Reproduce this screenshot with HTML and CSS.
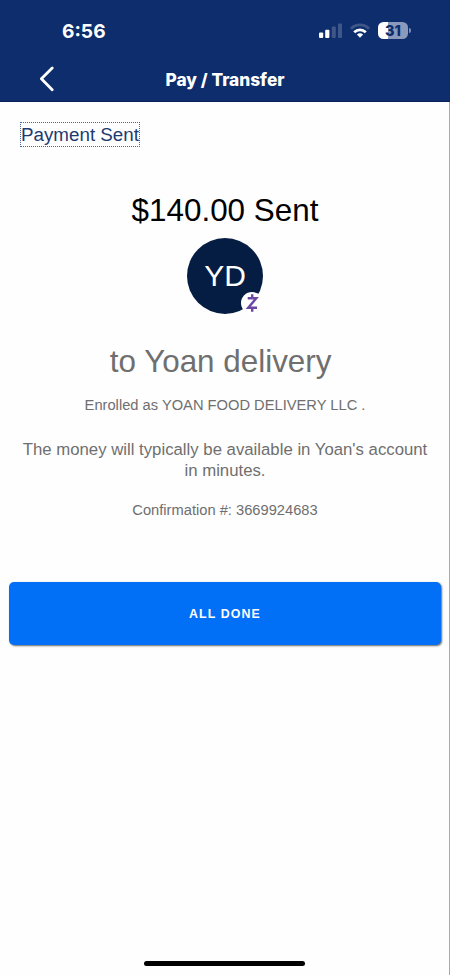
FILE: index.html
```html
<!DOCTYPE html>
<html lang="en">
  <head>
    <title>Pay / Transfer</title>
    <meta charset="utf-8" />
    <meta name="viewport" content="width=device-width, initial-scale=1.0" />
    <link rel="stylesheet" href="styles.css">
  </head>

  <body>
    <header class="header">
      <div class="status-bar">
        <span class="time">6:56</span>
        <div class="status-icons">
          <svg class="signal" width="24" height="16" viewBox="0 0 24 16">
            <rect x="0" y="9.5" width="4.2" height="5.5" rx="1" fill="#fff" />
            <rect x="6.2" y="6.7" width="4.2" height="8.3" rx="1" fill="#fff" />
            <rect x="12.8" y="3.5" width="4" height="11.5" rx="1" fill="#3f5788" />
            <rect x="19" y="0.5" width="4" height="14.5" rx="1" fill="#3f5788" />
          </svg>
          <svg class="wifi" width="20" height="16" viewBox="0 0 20 16" fill="none" stroke-width="2.8">
            <path d="M1 5.7C6 0.7 14 0.7 19 5.7" stroke="#3f5788" />
            <path d="M4.2 9.2C7.5 6.1 12.5 6.1 15.8 9.2" stroke="#fff" />
            <path d="M6.9 11.5C8.7 9.9 11.3 9.9 13.1 11.5L10 14.7Z" fill="#fff" />
          </svg>
          <div class="battery"><span class="battery-level">31</span></div>
        </div>
      </div>
      <div class="nav">
        <svg class="back" width="16" height="26" viewBox="0 0 16 26" fill="none" stroke="#fff" stroke-width="2.8" stroke-linecap="round" stroke-linejoin="round">
          <path d="M13.2 1.9L2.4 12.8L13.2 23.7" />
        </svg>
        <h1 class="nav-title">Pay / Transfer</h1>
      </div>
    </header>

    <main class="content">
      <h2 class="page-title">Payment Sent</h2>
      <p class="amount">$140.00 Sent</p>
      <div class="avatar">
        YD
        <svg class="zelle" width="22" height="22" viewBox="0 0 22 22">
          <circle cx="11" cy="11" r="11" fill="#fff" />
          <path d="M6.7 6.2H15.3L7.2 15.8H16M11.2 2.2V6M11.2 16V19.8" fill="none" stroke="#6b46a3" stroke-width="2.4" />
        </svg>
      </div>
      <p class="recipient">to Yoan delivery&nbsp;</p>
      <p class="enrolled">Enrolled as YOAN FOOD DELIVERY LLC .</p>
      <p class="message">The money will typically be available in Yoan's account in minutes.</p>
      <p class="confirmation">Confirmation #: 3669924683</p>
      <button class="done">ALL DONE</button>
    </main>

    <footer class="footer">
      <div class="home-indicator"></div>
    </footer>
  </body>
</html>
```

FILE: styles.css
```css
* {
  box-sizing: border-box;
}

body {
  display: flex;
  flex-direction: column;
  height: 975px;
  margin: 0;
  font-family: "Liberation Sans", Arial, sans-serif;
  color: #6f6f6f;
  background-color: #fefefe;
}

h1,
h2,
p {
  margin: 0;
  font-weight: normal;
}

.header {
  height: 102px;
  color: #fff;
  background-color: #0d2d6c;
  font-family: Inter, sans-serif;
  border-bottom: 1px solid #09215b;
}

.status-bar {
  display: flex;
  justify-content: space-between;
  align-items: center;
  height: 61px;
  padding: 0 39px 0 62px;
}

.time {
  font-size: 19.2px;
  font-weight: 700;
}

.status-icons {
  display: flex;
  align-items: center;
}

.wifi {
  margin: 0 8px 0 7px;
}

.battery {
  display: flex;
  align-items: center;
}

.battery::after {
  content: "";
  width: 2px;
  height: 5px;
  margin-left: 1px;
  border-radius: 0 2px 2px 0;
  background-color: #7d8cb2;
}

.battery-level {
  width: 30px;
  height: 17px;
  border-radius: 5.5px;
  background: linear-gradient(to right, #fff 32%, #8b99bc 32%);
  color: #0d2d6c;
  font-size: 14.5px;
  font-weight: 800;
  line-height: 17px;
  text-align: center;
}

.nav {
  display: grid;
  grid-template-columns: 60px 1fr 60px;
  align-items: center;
  height: 36px;
}

.back {
  justify-self: end;
  margin-right: 5px;
}

.nav-title {
  padding-top: 1px;
  font-size: 17.3px;
  font-weight: 800;
  text-align: center;
}

.content {
  display: flex;
  flex: 1;
  flex-direction: column;
  align-items: center;
  padding: 20px 8px 0 9px;
  border-right: 1px solid #a9a9a9;
  text-align: center;
}

.page-title {
  align-self: flex-start;
  height: 25px;
  margin-left: 11px;
  border: 1px dotted #3c65a5;
  color: #1d3b70;
  font-size: 18.8px;
  line-height: 24px;
}

.amount {
  margin-top: 44px;
  color: #000;
  font-size: 31.4px;
  line-height: 40px;
}

.avatar {
  position: relative;
  width: 76px;
  height: 76px;
  margin-top: 7px;
  border-radius: 50%;
  background-color: #061d43;
  color: #fff;
  font-size: 30px;
  line-height: 76px;
}

.zelle {
  position: absolute;
  right: 0;
  bottom: 0;
}

.recipient {
  margin-top: 28px;
  font-size: 31.4px;
  line-height: 40px;
}

.enrolled {
  margin-top: 13px;
  font-size: 14.7px;
  line-height: 20px;
}

.message {
  width: 416px;
  margin-top: 24px;
  font-size: 16.75px;
  line-height: 21px;
}

.confirmation {
  margin-top: 19px;
  font-size: 14.7px;
  line-height: 20px;
}

.done {
  align-self: stretch;
  height: 63px;
  margin-top: 62px;
  border: none;
  border-radius: 5px;
  background-color: #026ff7;
  box-shadow: 1px 1px 2px rgba(0, 0, 0, 0.6);
  color: #fff;
  font-family: inherit;
  font-size: 12.4px;
  font-weight: bold;
  letter-spacing: 1.1px;
}

.footer {
  display: flex;
  justify-content: center;
  height: 14px;
  border-right: 1px solid #a9a9a9;
}

.home-indicator {
  width: 161px;
  height: 5px;
  border-radius: 3px;
  background-color: #000;
}
```
